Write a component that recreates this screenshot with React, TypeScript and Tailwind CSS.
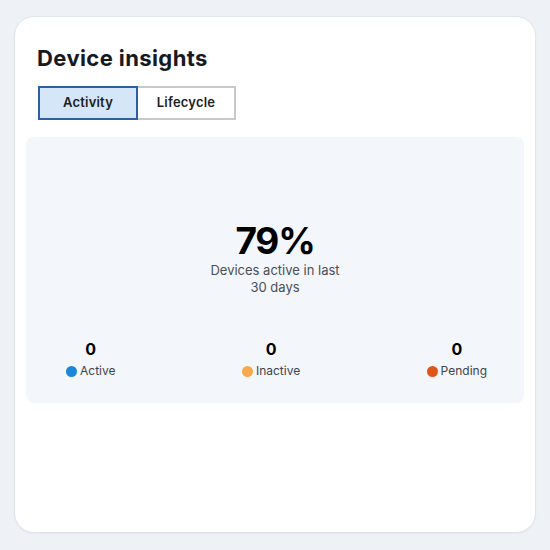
const stats = [
  { label: "Active", value: 0, dot: "bg-[#1a86d9]" },
  { label: "Inactive", value: 0, dot: "bg-[#f9a94b]" },
  { label: "Pending", value: 0, dot: "bg-[#de561b]" },
];

export default function App() {
  return (
    <div
      className="w-[550px] h-[550px] bg-[#eef1f6] pt-4 pl-[14px] pr-[14px] pb-[17px]"
      style={{ fontFamily: "Inter, 'Noto Sans', sans-serif" }}
    >
      <div className="h-full bg-white rounded-[20px] border border-[#e0e4ec] shadow-[0_1px_2px_rgba(0,0,0,0.04)] px-[11px] pt-[27px]">
        {/* Header */}
        <h1 className="ml-[11px] text-[22px] leading-[28px] font-bold text-[#16191d] tracking-[0.4px]">
          Device insights
        </h1>

        {/* Tabs */}
        <div className="ml-[12px] mt-[14px] flex">
          <button className="w-[100px] h-[34px] bg-[#d4e6f7] border-2 border-[#2f5ea3] text-[13px] font-semibold text-[#1a1d21] tracking-[0.2px]">
            Activity
          </button>
          <button className="w-[98px] h-[34px] bg-white border-2 border-l-0 border-[#c9c9c9] text-[13px] font-semibold text-[#1a1d21] tracking-[0.2px]">
            Lifecycle
          </button>
        </div>

        {/* Panel */}
        <div className="mt-[17px] h-[266px] bg-[#f3f6fa] rounded-[8px] flex flex-col items-center pt-[83px]">
          <div className="text-[37px] leading-[42px] font-bold text-black tracking-[-1.2px]">79%</div>
          <div className="text-[13px] leading-[17px] text-[#4a4f57] text-center">
            Devices active in last
            <br />
            30 days
          </div>

          <div className="w-full mt-[43px] flex justify-between pl-[40px] pr-[37px]">
            {stats.map((s) => (
              <div key={s.label} className="flex flex-col items-center">
                <div className="text-[16px] leading-[20px] font-bold text-black">{s.value}</div>
                <div className="mt-[4px] flex items-center gap-[3px] text-[12px] leading-[16px] text-[#3e434a]">
                  <span className={`w-[11px] h-[11px] rounded-full ${s.dot}`} />
                  {s.label}
                </div>
              </div>
            ))}
          </div>
        </div>
      </div>
    </div>
  );
}
